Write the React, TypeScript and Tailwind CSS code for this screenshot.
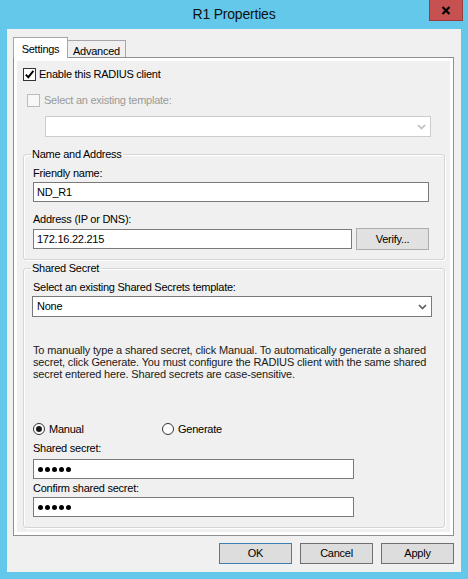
import React from 'react';

const ui = "font-['Liberation_Sans',Arial,sans-serif] text-[11px] tracking-[-0.25px] text-black";

function Chevron({ disabled = false }: { disabled?: boolean }) {
  return (
    <svg width="9" height="6" viewBox="0 0 9 6" className="shrink-0">
      <path
        d="M1 1 L4.5 4.5 L8 1"
        fill="none"
        stroke={disabled ? '#bdbdbd' : '#606060'}
        strokeWidth="1.7"
      />
    </svg>
  );
}

function CheckBox({ checked = false, disabled = false }: { checked?: boolean; disabled?: boolean }) {
  return (
    <span
      className={
        disabled
          ? 'flex h-[13px] w-[13px] shrink-0 items-center justify-center border border-[#bcbcbc] bg-[#f7f7f7]'
          : 'flex h-[13px] w-[13px] shrink-0 items-center justify-center border border-[#333333] bg-white'
      }
    >
      {checked && (
        <svg width="11" height="11" viewBox="0 0 11 11">
          <path d="M1.8 5.6 L4.3 8.2 L9.4 1.8" fill="none" stroke="#000" strokeWidth="1.9" />
        </svg>
      )}
    </span>
  );
}

function Radio({ checked = false }: { checked?: boolean }) {
  return (
    <span className="flex h-[12px] w-[12px] shrink-0 items-center justify-center rounded-full border border-[#333333] bg-white">
      {checked && <span className="h-[6px] w-[6px] rounded-full bg-[#1a1a1a]" />}
    </span>
  );
}

function TextBox({ value, className }: { value?: React.ReactNode; className: string }) {
  return (
    <div className={`flex h-[20px] items-center border border-[#7a7a7a] bg-white px-[3px] ${className}`}>
      {value}
    </div>
  );
}

function Secret() {
  return (
    <div className="flex gap-[2px] pl-[1px]">
      {[0, 1, 2, 3, 4].map((i) => (
        <span key={i} className="h-[5px] w-[5px] rounded-full bg-black" />
      ))}
    </div>
  );
}

function WinButton({ label, isDefault = false }: { label: string; isDefault?: boolean }) {
  return (
    <button
      className={
        isDefault
          ? 'flex h-[21px] w-[73px] items-center justify-center border border-[#3c7fb1] bg-[#dddddd]'
          : 'flex h-[21px] w-[73px] items-center justify-center border border-[#707070] bg-[#dddddd]'
      }
    >
      {label}
    </button>
  );
}

export default function App() {
  return (
    <div className={`flex h-[579px] w-[468px] flex-col bg-[#63c8ea] ${ui}`}>
      {/* title bar */}
      <div className="relative flex h-[29px] shrink-0 items-center justify-center">
        <span className="text-[14px] tracking-[-0.2px] text-[#111111]">R1 Properties</span>
        <div className="absolute right-[5px] top-0 flex h-[21px] w-[34px] items-center justify-center border border-t-0 border-[#9c3b3b] bg-[#c75050]">
          <svg width="10" height="9" viewBox="0 0 10 9">
            <path d="M1.5 1 L8.5 8 M8.5 1 L1.5 8" stroke="#000" strokeWidth="2.2" />
          </svg>
        </div>
      </div>

      {/* client area */}
      <div className="mx-[7px] flex h-[543px] flex-col bg-[#f0f0f0] pt-[8px]">
        {/* tabs */}
        <div className="ml-[6px] flex h-[20px] items-end">
          <div className="relative z-10 mb-[-1px] flex h-[21px] w-[55px] items-start justify-center border border-b-0 border-[#a6a6a6] bg-white pt-[3px]">
            Settings
          </div>
          <div className="flex h-[17px] w-[58px] items-start justify-center border border-b-0 border-l-0 border-[#a6a6a6] bg-[#f0f0f0] pt-[2px]">
            Advanced
          </div>
        </div>

        {/* tab panel */}
        <div className="ml-[6px] h-[479px] w-[441px] border border-[#8f8f8f] bg-white p-[3px]">
          <div className="flex h-full flex-col bg-[#f0f0f0]">
            <label className="ml-[6px] mt-[7px] flex h-[13px] items-center gap-[3px]">
              <CheckBox checked />
              <span>Enable this RADIUS client</span>
            </label>

            <label className="ml-[10px] mt-[13px] flex h-[13px] items-center gap-[4px] text-[#9a9a9a]">
              <CheckBox disabled />
              <span>Select an existing template:</span>
            </label>

            <div className="ml-[28px] mt-[9px] flex h-[21px] w-[386px] items-center justify-end border border-[#cccccc] bg-white pr-[4px]">
              <Chevron disabled />
            </div>

            {/* Name and Address */}
            <fieldset className="ml-[6px] mt-[11px] w-[422px] rounded-[3px] border border-[#d5d5d5] pb-[9px] pl-[9px] shadow-[inset_1px_1px_0_#ffffff,1px_1px_0_#ffffff]">
              <legend className="ml-[-2px] px-[1px] leading-[13px]">Name and Address</legend>
              <div className="mt-[6px] leading-[13px]">Friendly name:</div>
              <TextBox value="ND_R1" className="mt-[2px] w-[396px]" />
              <div className="mt-[11px] leading-[13px]">Address (IP or DNS):</div>
              <div className="mt-[2px] flex h-[22px] items-center gap-[4px]">
                <TextBox value="172.16.22.215" className="w-[319px]" />
                <button className="flex h-[22px] w-[73px] items-center justify-center border border-[#adadad] bg-[#e1e1e1]">
                  Verify...
                </button>
              </div>
            </fieldset>

            {/* Shared Secret */}
            <fieldset className="ml-[6px] mt-[2px] w-[422px] rounded-[3px] border border-[#d5d5d5] pb-[10px] pl-[9px] shadow-[inset_1px_1px_0_#ffffff,1px_1px_0_#ffffff]">
              <legend className="ml-[-2px] px-[1px] leading-[13px]">Shared Secret</legend>
              <div className="mt-[6px] leading-[13px]">Select an existing Shared Secrets template:</div>
              <div className="ml-[-1px] mt-[2px] flex h-[21px] w-[400px] items-center justify-between border border-[#7a7a7a] bg-white pl-[4px] pr-[4px]">
                <span>None</span>
                <Chevron />
              </div>

              <p className="mt-[27px] leading-[12px] tracking-[-0.15px] text-[#1a1a1a]">
                To manually type a shared secret, click Manual. To automatically generate a shared
                <br />
                secret, click Generate. You must configure the RADIUS client with the same shared
                <br />
                secret entered here. Shared secrets are case-sensitive.
              </p>

              <div className="mt-[43px] flex h-[12px] items-center">
                <label className="flex w-[129px] items-center gap-[4px]">
                  <Radio checked />
                  <span>Manual</span>
                </label>
                <label className="flex items-center gap-[4px]">
                  <Radio />
                  <span>Generate</span>
                </label>
              </div>

              <div className="mt-[7px] leading-[13px]">Shared secret:</div>
              <TextBox value={<Secret />} className="mt-[4px] w-[321px]" />
              <div className="mt-[3px] leading-[13px]">Confirm shared secret:</div>
              <TextBox value={<Secret />} className="mt-[2px] w-[321px]" />
            </fieldset>
          </div>
        </div>

        {/* dialog buttons */}
        <div className="mr-[7px] mt-[7px] flex justify-end gap-[8px]">
          <WinButton label="OK" isDefault />
          <WinButton label="Cancel" />
          <WinButton label="Apply" />
        </div>
      </div>
    </div>
  );
}
